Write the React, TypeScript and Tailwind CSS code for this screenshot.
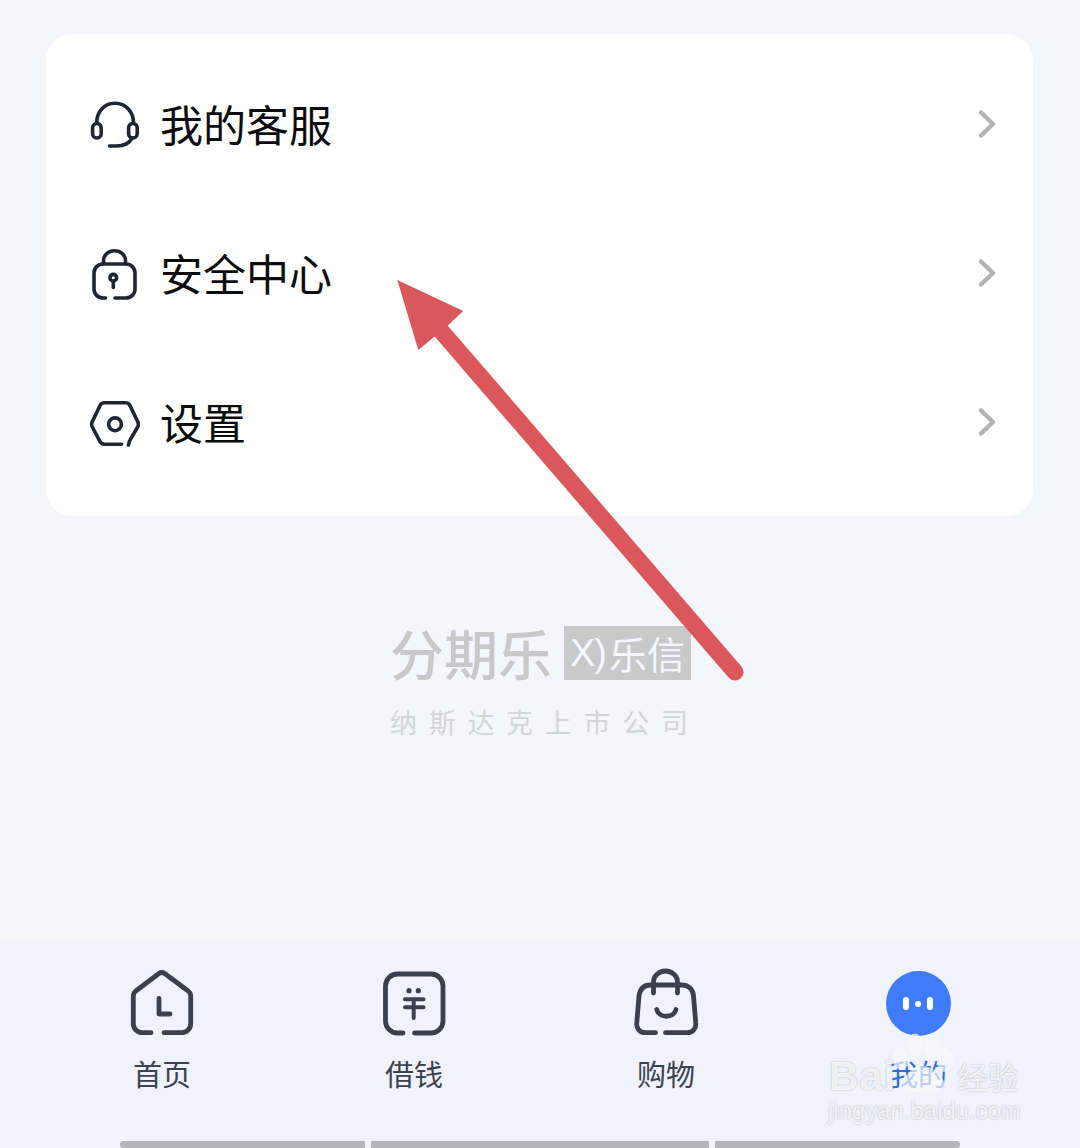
const cjk = "font-['Noto_Sans_CJK_SC','Noto_Sans',sans-serif]";

function Chevron() {
  return (
    <svg width="24" height="32" viewBox="0 0 24 32" className="shrink-0" fill="none" stroke="#b2b3b5" strokeWidth="4.5" strokeLinecap="round" strokeLinejoin="round">
      <path d="M6 4.5 L18 16 L6 27.5" />
    </svg>
  );
}

function Headset() {
  return (
    <svg width="52" height="52" viewBox="0 0 52 52" fill="none" stroke="#1f2533" strokeWidth="3.6" strokeLinecap="round" strokeLinejoin="round">
      <path d="M8.7 23 C8.7 12 16 3.3 27 3.3 S45.5 12 45.5 23" />
      <rect x="4.6" y="23.5" width="8.6" height="14.5" rx="4.3" />
      <rect x="40.6" y="23.5" width="8.6" height="14.5" rx="4.3" />
      <path d="M44 38 C41.5 43.5 36 46 28 46 H21.5" />
    </svg>
  );
}

function Lock() {
  return (
    <svg width="52" height="52" viewBox="0 0 52 52" fill="none" stroke="#1f2533" strokeWidth="3.6" strokeLinecap="round" strokeLinejoin="round">
      <path d="M27 49 H38 a9 9 0 0 0 9-9 V24 a9 9 0 0 0-9-9 H15 a9 9 0 0 0-9 9 V40 a9 9 0 0 0 9 9 H17.5" />
      <path d="M15.5 15 V11.5 a11 9.7 0 0 1 22 0 V15" />
      <circle cx="25.3" cy="28.7" r="3.3" />
      <path d="M25.3 32 V38.5" />
    </svg>
  );
}

function Hexagon() {
  return (
    <svg width="52" height="52" viewBox="0 0 52 52" fill="none" stroke="#1f2533" strokeWidth="3.6" strokeLinecap="round" strokeLinejoin="round">
      <path d="M33.5 46.3 H16.5 q-2.7 0-4.2-2.2 L4.3 29 q-1.3-2.7 0-5.4 L12.3 7 q1.5-2.3 4.2-2.3 H37.5 q2.7 0 4.2 2.3 L49.7 23.6 q1.3 2.7 0 5.4 L43.5 39.5 q-2.5 3.5-3 7.5" />
      <circle cx="27" cy="26.3" r="6.4" />
    </svg>
  );
}

function HomeIcon() {
  return (
    <svg width="70" height="70" viewBox="0 0 70 70" fill="none" stroke="#3a404c" strokeWidth="4.8" strokeLinecap="round" strokeLinejoin="round">
      <path d="M37 64.7 H54.7 a9 9 0 0 0 9-9 V28 q0-3-2.5-5 L37.7 5.5 q-2.9-1.9-5.8 0 L8.8 23 q-2.5 2-2.5 5 V55.7 a9 9 0 0 0 9 9 H24" />
      <path d="M32 30.5 V46 H43" />
    </svg>
  );
}

function MoneyIcon() {
  return (
    <svg width="70" height="70" viewBox="0 0 70 70" fill="none" stroke="#3a404c" strokeWidth="4.8" strokeLinecap="round" strokeLinejoin="round">
      <path d="M35.5 65 H52 a12 12 0 0 0 12-12 V18 a12 12 0 0 0-12-12 H18.5 a12 12 0 0 0-12 12 V53 a12 12 0 0 0 12 12 H24" />
      <circle cx="30" cy="22.7" r="2.6" fill="#3a404c" stroke="none" />
      <circle cx="39.3" cy="22.7" r="2.6" fill="#3a404c" stroke="none" />
      <path d="M26 31.3 H44.5 M26 39.3 H44.5 M34.7 31.3 V50" strokeWidth="4" />
    </svg>
  );
}

function BagIcon() {
  return (
    <svg width="70" height="70" viewBox="0 0 70 70" fill="none" stroke="#3a404c" strokeWidth="4.8" strokeLinecap="round" strokeLinejoin="round">
      <path d="M34.5 64.7 H56 C62 64.7 65.5 60 64.7 54.5 L62.5 28 C62 21 57 17 50.5 17 H19.8 C13 17 9 21 8 28 L5.8 54.5 C5 60 8.5 64.7 14.5 64.7 H24.5" />
      <path d="M22.5 25 V14 a12 11 0 0 1 24 0 V25" />
      <path d="M25.7 41.5 C28 50.5 43 50.5 45 41.5" />
    </svg>
  );
}

function MineIcon() {
  return (
    <div className="w-[65px] h-[65px] mt-[3px] rounded-full bg-[#3f7bfb] flex items-center justify-center gap-[6px]">
      <div className="w-[6px] h-[13px] rounded-full bg-white" />
      <div className="w-[6px] h-[6px] rounded-full bg-white" />
      <div className="w-[6px] h-[13px] rounded-full bg-white" />
    </div>
  );
}

const rows = [
  { label: "我的客服", icon: <Headset /> },
  { label: "安全中心", icon: <Lock /> },
  { label: "设置", icon: <Hexagon /> },
];

const tabs = [
  { label: "首页", icon: <HomeIcon />, active: false },
  { label: "借钱", icon: <MoneyIcon />, active: false },
  { label: "购物", icon: <BagIcon />, active: false },
  { label: "我的", icon: <MineIcon />, active: true },
];

export default function App() {
  return (
    <div className={`relative w-[1080px] h-[1148px] overflow-hidden flex flex-col bg-[#f5f6fb] ${cjk}`}>
      <main className="flex-1 flex flex-col pt-[34px]">
        <section className="w-[987px] ml-[46px] bg-white rounded-[26px] pt-[17px] pb-[18px] pl-[42px] pr-[34px]">
          {rows.map((r) => (
            <div key={r.label} className="h-[149px] flex items-center">
              <div className="w-[52px] h-[52px] shrink-0">{r.icon}</div>
              <span className="ml-[20px] mt-[-6px] text-[43px] leading-[52px] text-[#0c0c0e]">{r.label}</span>
              <div className="ml-auto mt-[-3px]">
                <Chevron />
              </div>
            </div>
          ))}
        </section>

        <div className="mt-[109px] ml-[390px] w-[302px] flex flex-col">
          <div className="flex items-center w-full h-[56px] gap-[12px]">
            <span className="text-[54px] leading-[56px] font-medium text-[#c9c9c9] whitespace-nowrap">分期乐</span>
            <div className="w-[127px] h-[54px] bg-[#c9c9c9] flex items-center justify-center gap-[3px] text-[#f5f6fb] text-[38px] leading-[54px] whitespace-nowrap">
              <span className="font-['Liberation_Sans',sans-serif] text-[38px] tracking-[-1px]">X)</span>
              <span>乐信</span>
            </div>
          </div>
          <div className="mt-[24px] text-[27px] leading-[34px] text-[#d4d5d8] tracking-[11.7px] whitespace-nowrap w-full">纳斯达克上市公司</div>
        </div>
      </main>

      <nav className="h-[208px] bg-[#f0f3fb] flex flex-col">
        <div className="grid grid-cols-4 px-[36px] pt-[28px]">
          {tabs.map((t) => (
            <div key={t.label} className="flex flex-col items-center">
              <div className="h-[70px] flex items-start justify-center">{t.icon}</div>
              <span className={`mt-[17px] text-[29px] leading-[36px] ${t.active ? "text-[#2f6ae0]" : "text-[#3c4250]"}`}>{t.label}</span>
            </div>
          ))}
        </div>
        <div className="mt-auto flex gap-[6px] pl-[120px]">
          <div className="w-[245px] h-[7px] bg-[#b4b6bc] rounded-l-full" />
          <div className="w-[338px] h-[7px] bg-[#b4b6bc]" />
          <div className="w-[245px] h-[7px] bg-[#b4b6bc] rounded-r-full" />
        </div>
      </nav>

      {/* annotation arrow laid over the page */}
      <svg className="absolute left-0 top-0 pointer-events-none" width="1080" height="1148" viewBox="0 0 1080 1148" fill="none">
        <path d="M436 325 L735 672" stroke="#da575c" strokeWidth="17" strokeLinecap="round" />
        <polygon points="397.3,280 463.3,311 448.3,325 434.3,336.7 418.3,350" fill="#da575c" />
      </svg>

      {/* Baidu jingyan watermark */}
      <svg className="absolute left-[885px] top-[1030px] pointer-events-none" width="80" height="66" viewBox="0 0 80 66" fill="#f7f8fc" fillOpacity="0.7">
        <ellipse cx="30" cy="15" rx="8" ry="11.5" />
        <ellipse cx="47" cy="16" rx="8.5" ry="12.5" />
        <ellipse cx="16" cy="29" rx="8.5" ry="11" />
        <ellipse cx="60" cy="30" rx="8.5" ry="12" />
        <path d="M37 36 C48 36 52 44 57 48 C63 55 56 64 47 63 C41 62 33 62 27 63 C18 64 11 56 18 48 C24 44 27 36 37 36 Z" />
      </svg>
      <div className="absolute left-[829px] top-[1052px] flex items-center w-[195px] h-[48px] pointer-events-none text-white/80 [text-shadow:0_0_2px_#aab0bf]">
        <span className="font-['Liberation_Sans',sans-serif] font-bold text-[41px] leading-[48px] tracking-[1px]">Bai</span>
        <span className="ml-auto mr-[5px] text-[31px] leading-[48px]">经验</span>
      </div>
      <div className="absolute left-[828px] top-[1097px] font-['Liberation_Sans',sans-serif] text-[23.5px] leading-[28px] tracking-[0.2px] text-white/80 pointer-events-none whitespace-nowrap [text-shadow:0_0_2px_#aab0bf]">jingyan.baidu.com</div>
    </div>
  );
}
